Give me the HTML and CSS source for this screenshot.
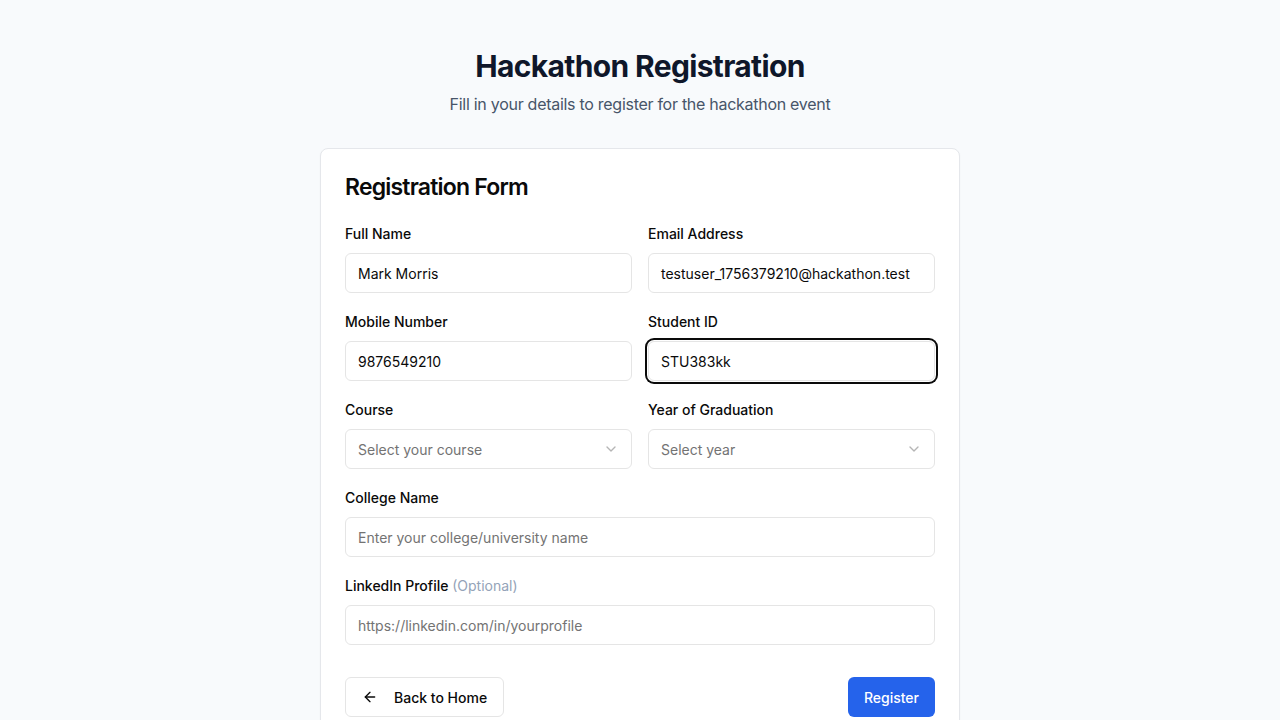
FILE: index.html
```html
<!DOCTYPE html>
<html lang="en">
<head>
<meta charset="utf-8">
<title>Hackathon Registration</title>
<link rel="stylesheet" href="styles.css">
</head>
<body>
<main class="page">
  <header class="intro">
    <h1 class="title">Hackathon Registration</h1>
    <p class="subtitle">Fill in your details to register for the hackathon event</p>
  </header>
  <section class="card">
    <h2 class="card-title">Registration Form</h2>
    <form class="form">
      <div class="grid">
        <div class="field">
          <label class="label">Full Name</label>
          <div class="input">Mark Morris</div>
        </div>
        <div class="field">
          <label class="label">Email Address</label>
          <div class="input">testuser_1756379210@hackathon.test</div>
        </div>
        <div class="field">
          <label class="label">Mobile Number</label>
          <div class="input">9876549210</div>
        </div>
        <div class="field">
          <label class="label">Student ID</label>
          <div class="input focused">STU383kk</div>
        </div>
        <div class="field">
          <label class="label">Course</label>
          <div class="input select"><span class="placeholder">Select your course</span>
            <svg class="chev" width="16" height="16" viewBox="0 0 24 24" fill="none" stroke="currentColor" stroke-width="2" stroke-linecap="round" stroke-linejoin="round"><path d="m6 9 6 6 6-6"/></svg>
          </div>
        </div>
        <div class="field">
          <label class="label">Year of Graduation</label>
          <div class="input select"><span class="placeholder">Select year</span>
            <svg class="chev" width="16" height="16" viewBox="0 0 24 24" fill="none" stroke="currentColor" stroke-width="2" stroke-linecap="round" stroke-linejoin="round"><path d="m6 9 6 6 6-6"/></svg>
          </div>
        </div>
        <div class="field wide">
          <label class="label">College Name</label>
          <div class="input"><span class="placeholder">Enter your college/university name</span></div>
        </div>
        <div class="field wide">
          <label class="label">LinkedIn Profile <span class="optional">(Optional)</span></label>
          <div class="input"><span class="placeholder">https://linkedin.com/in/yourprofile</span></div>
        </div>
      </div>
      <div class="actions">
        <button type="button" class="btn btn-outline">
          <svg width="16" height="16" viewBox="0 0 24 24" fill="none" stroke="currentColor" stroke-width="2" stroke-linecap="round" stroke-linejoin="round"><path d="m12 19-7-7 7-7"/><path d="M19 12H5"/></svg>
          Back to Home
        </button>
        <button type="button" class="btn btn-primary">Register</button>
      </div>
    </form>
  </section>
</main>
</body>
</html>
```

FILE: styles.css
```css
* { box-sizing: border-box; }
html, body { margin: 0; padding: 0; }
body {
  background: #f8fafc;
  font-family: Inter, "Noto Sans", "Liberation Sans", sans-serif;
  color: #0a0a0a;
  -webkit-font-smoothing: antialiased;
}
.page {
  display: flex;
  flex-direction: column;
  align-items: center;
  padding-top: 48px;
}
.intro { text-align: center; margin-bottom: 32px; }
.title {
  margin: 0;
  font-size: 30px;
  line-height: 36px;
  font-weight: 700;
  color: #0f172a;
  letter-spacing: -0.65px;
}
.subtitle {
  margin: 8px 0 0;
  font-size: 16px;
  line-height: 24px;
  color: #475569;
  letter-spacing: -0.28px;
}
.card {
  width: 640px;
  background: #fff;
  border: 1px solid #e5e7eb;
  border-radius: 8px;
  box-shadow: 0 1px 2px rgba(0,0,0,0.04);
  padding: 24px;
}
.card-title {
  margin: 2px 0 0;
  font-size: 23px;
  line-height: 24px;
  font-weight: 600;
  letter-spacing: -0.8px;
  color: #0a0a0a;
}
.form { margin-top: 28px; }
.grid {
  display: grid;
  grid-template-columns: 1fr 1fr;
  column-gap: 16px;
  row-gap: 22px;
}
.field { display: flex; flex-direction: column; gap: 12px; }
.field.wide { grid-column: 1 / -1; }
.label {
  font-size: 14px;
  line-height: 14px;
  font-weight: 500;
  color: #0a0a0a;
}
.optional { color: #94a3b8; font-weight: 400; }
.input {
  height: 40px;
  border: 1px solid #e5e5e5;
  border-radius: 6px;
  padding: 0 12px;
  display: flex;
  align-items: center;
  font-size: 14px;
  color: #0a0a0a;
  background: #fff;
}
.input.focused {
  box-shadow: 0 0 0 1px #fff, 0 0 0 3px #0a0a0a;
}
.placeholder { color: #737373; }
.select { justify-content: space-between; }
.chev { color: #a3a3a3; opacity: 0.8; }
.actions {
  display: flex;
  justify-content: space-between;
  margin-top: 32px;
}
.btn {
  height: 40px;
  border-radius: 6px;
  font-family: inherit;
  font-size: 14px;
  font-weight: 500;
  display: inline-flex;
  align-items: center;
  gap: 8px;
  cursor: pointer;
}
.btn-outline {
  background: #fff;
  border: 1px solid #e5e5e5;
  color: #0a0a0a;
  padding: 0 16px;
  gap: 16px;
}
.btn-primary {
  background: #2563eb;
  border: none;
  color: #fff;
  padding: 0 16px;
}
```
